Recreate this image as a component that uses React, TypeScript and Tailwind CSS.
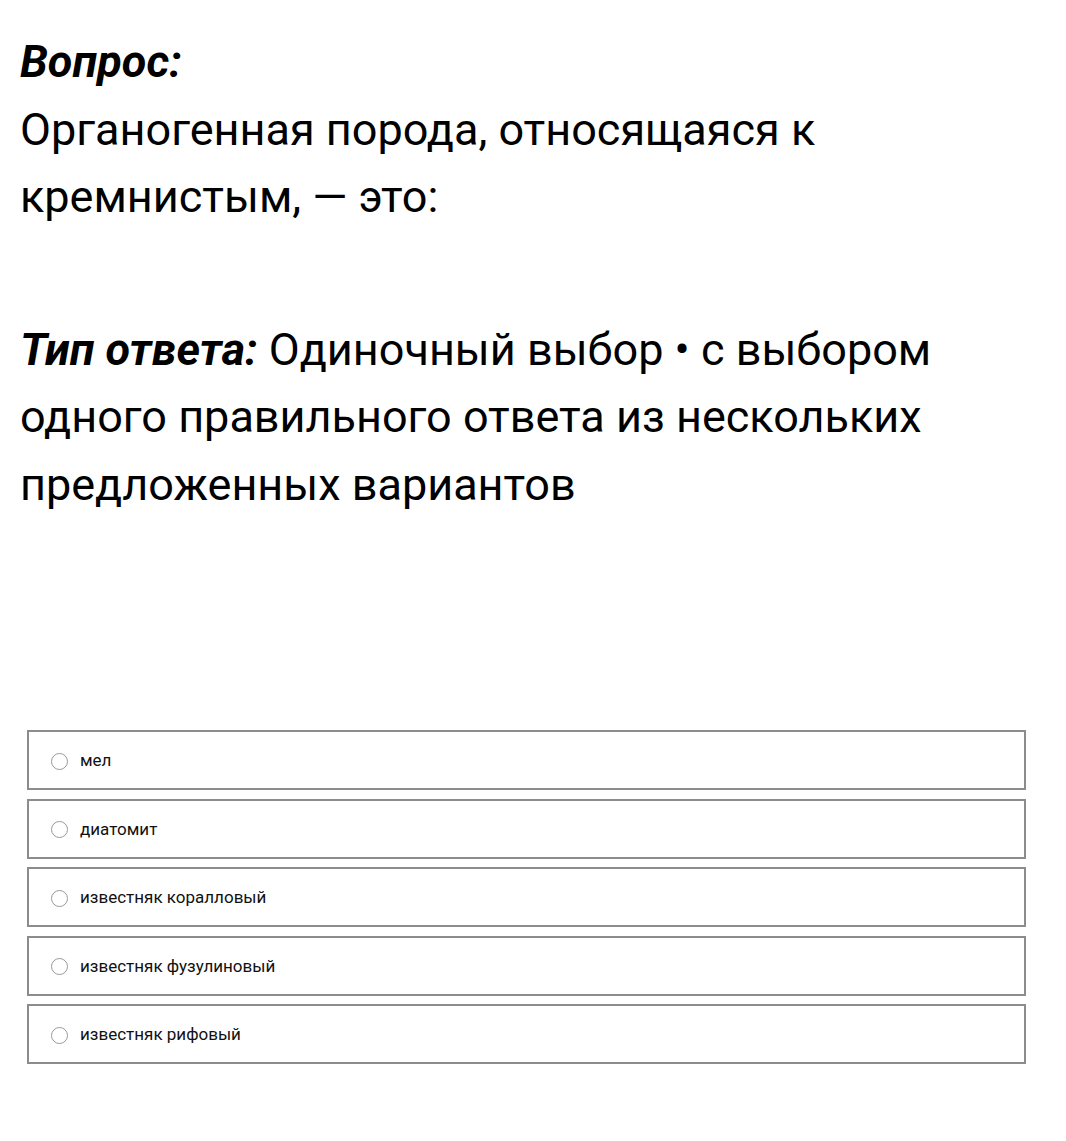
import React from 'react';

const options = ['мел', 'диатомит', 'известняк коралловый', 'известняк фузулиновый', 'известняк рифовый'];

export default function App() {
  return (
    <div className="min-h-[1141px] bg-white text-black" style={{ fontFamily: 'Roboto, "Noto Sans", sans-serif' }}>
      <div className="px-5 pt-[28px] text-[45px] leading-[1.5]">
        <p className="font-bold italic">Вопрос:</p>
        <p>Органогенная порода, относящаяся к кремнистым, — это:</p>
        <p className="mt-[85px] pr-[100px]">
          <span className="font-bold italic">Тип ответа:</span> Одиночный выбор • с выбором одного правильного ответа из нескольких предложенных вариантов
        </p>
      </div>

      {/* Answer options */}
      <div className="mt-[212px] ml-[27px] mr-[40px] flex flex-col gap-[8.5px]">
        {options.map((opt) => (
          <label key={opt} className="flex items-center h-[60px] border-2 border-[#8c8c8c] bg-white">
            <span className="ml-[22px] mt-[2px] w-[17px] h-[17px] rounded-full border-[1.5px] border-[#999999] shrink-0" />
            <span className="ml-[12px] mt-[2px] text-[17px] text-[#111]">{opt}</span>
          </label>
        ))}
      </div>
    </div>
  );
}
